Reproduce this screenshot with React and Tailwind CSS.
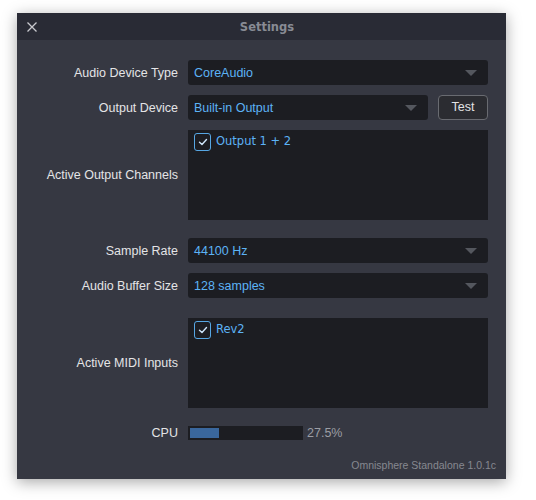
import React from "react";

const labelFont = { fontFamily: '"Liberation Sans", Arial, sans-serif' };

// Small grey triangle used on every dropdown
function Caret() {
  return (
    <svg width="12" height="6" viewBox="0 0 12 6" className="shrink-0">
      <path d="M0 0 H12 L6 6 Z" fill="#54575e" />
    </svg>
  );
}

function Dropdown({ value, className = "" }) {
  return (
    <div
      className={`h-[25px] bg-[#1c1d22] rounded-[3px] flex items-center justify-between pl-[6px] pr-[11px] ${className}`}
    >
      <span className="text-[12.5px] text-[#5cb3f6] pt-[1px]">{value}</span>
      <Caret />
    </div>
  );
}

function Checkbox({ label }) {
  return (
    <div className="flex items-center gap-[5px]">
      <div className="w-[17px] h-[18px] rounded-[3px] border-[1.5px] border-[#57a7e4] flex items-center justify-center">
        <svg width="10" height="8" viewBox="0 0 10 8">
          <path
            d="M1.5 4.2 L4 6.5 L8.5 1.5"
            fill="none"
            stroke="#cfe6fb"
            strokeWidth="1.4"
            strokeLinecap="round"
            strokeLinejoin="round"
          />
        </svg>
      </div>
      <span
        className="text-[11.5px] text-[#5cb3f6]"
        style={{ fontFamily: '"DejaVu Sans", sans-serif' }}
      >
        {label}
      </span>
    </div>
  );
}

// one label + control line
function Row({ label, className = "", children }) {
  return (
    <div className={`flex items-center gap-[10px] ${className}`}>
      <div className="w-[161px] shrink-0 text-right text-[12.5px] text-[#e4e4e6] pt-[1px]">
        {label}
      </div>
      <div className="w-[300px]">{children}</div>
    </div>
  );
}

export default function App() {
  return (
    <div className="w-[536px] h-[500px] bg-white pt-[13px] pl-[17px]" style={labelFont}>
      <div className="w-[489px] h-[466px] bg-[#363842] shadow-[0_3px_14px_rgba(0,0,0,0.35)] flex flex-col">
        {/* title bar */}
        <div className="h-[27px] bg-[#292b35] flex items-center relative">
          <svg
            width="10"
            height="10"
            viewBox="0 0 10 10"
            className="absolute left-[10px] top-[9px]"
          >
            <path d="M0.5 0.5 L9.5 9.5 M9.5 0.5 L0.5 9.5" stroke="#c9cacf" strokeWidth="1.3" />
          </svg>
          <div
            className="flex-1 text-center pl-[11px] pt-[3px] text-[11.5px] font-bold text-[#888b94]"
            style={{ fontFamily: '"DejaVu Sans", sans-serif' }}
          >
            Settings
          </div>
        </div>

        {/* body */}
        <div className="flex flex-col pt-[20px]">
          <Row label="Audio Device Type">
            <Dropdown value="CoreAudio" />
          </Row>

          <Row label="Output Device" className="mt-[10px]">
            <div className="flex gap-[10px]">
              <Dropdown value="Built-in Output" className="w-[240px]" />
              <button className="w-[50px] h-[25px] rounded-[4px] border border-[#696b71] bg-[#2b2c31] text-[12.5px] text-[#e2e2e4]">
                Test
              </button>
            </div>
          </Row>

          <Row label="Active Output Channels" className="mt-[10px]">
            <div className="h-[90px] bg-[#1c1d22] pl-[6px] pt-[3px]">
              <Checkbox label="Output 1 + 2" />
            </div>
          </Row>

          <Row label="Sample Rate" className="mt-[18px]">
            <Dropdown value="44100 Hz" />
          </Row>

          <Row label="Audio Buffer Size" className="mt-[10px]">
            <Dropdown value="128 samples" />
          </Row>

          <Row label="Active MIDI Inputs" className="mt-[20px]">
            <div className="h-[90px] bg-[#1c1d22] pl-[6px] pt-[3px]">
              <Checkbox label="Rev2" />
            </div>
          </Row>

          <Row label="CPU" className="mt-[15px]">
            <div className="flex items-center gap-[4px]">
              <div className="w-[115px] h-[14px] bg-[#1c1d22] p-[2px]">
                <div className="h-full w-[29px] bg-[#3a679d]" />
              </div>
              <span className="text-[12.5px] text-[#9c9ea5]">27.5%</span>
            </div>
          </Row>
        </div>

        <div className="mt-auto pb-[5px] pr-[10px] text-right text-[10.5px] text-[#868890]">
          Omnisphere Standalone 1.0.1c
        </div>
      </div>
    </div>
  );
}
